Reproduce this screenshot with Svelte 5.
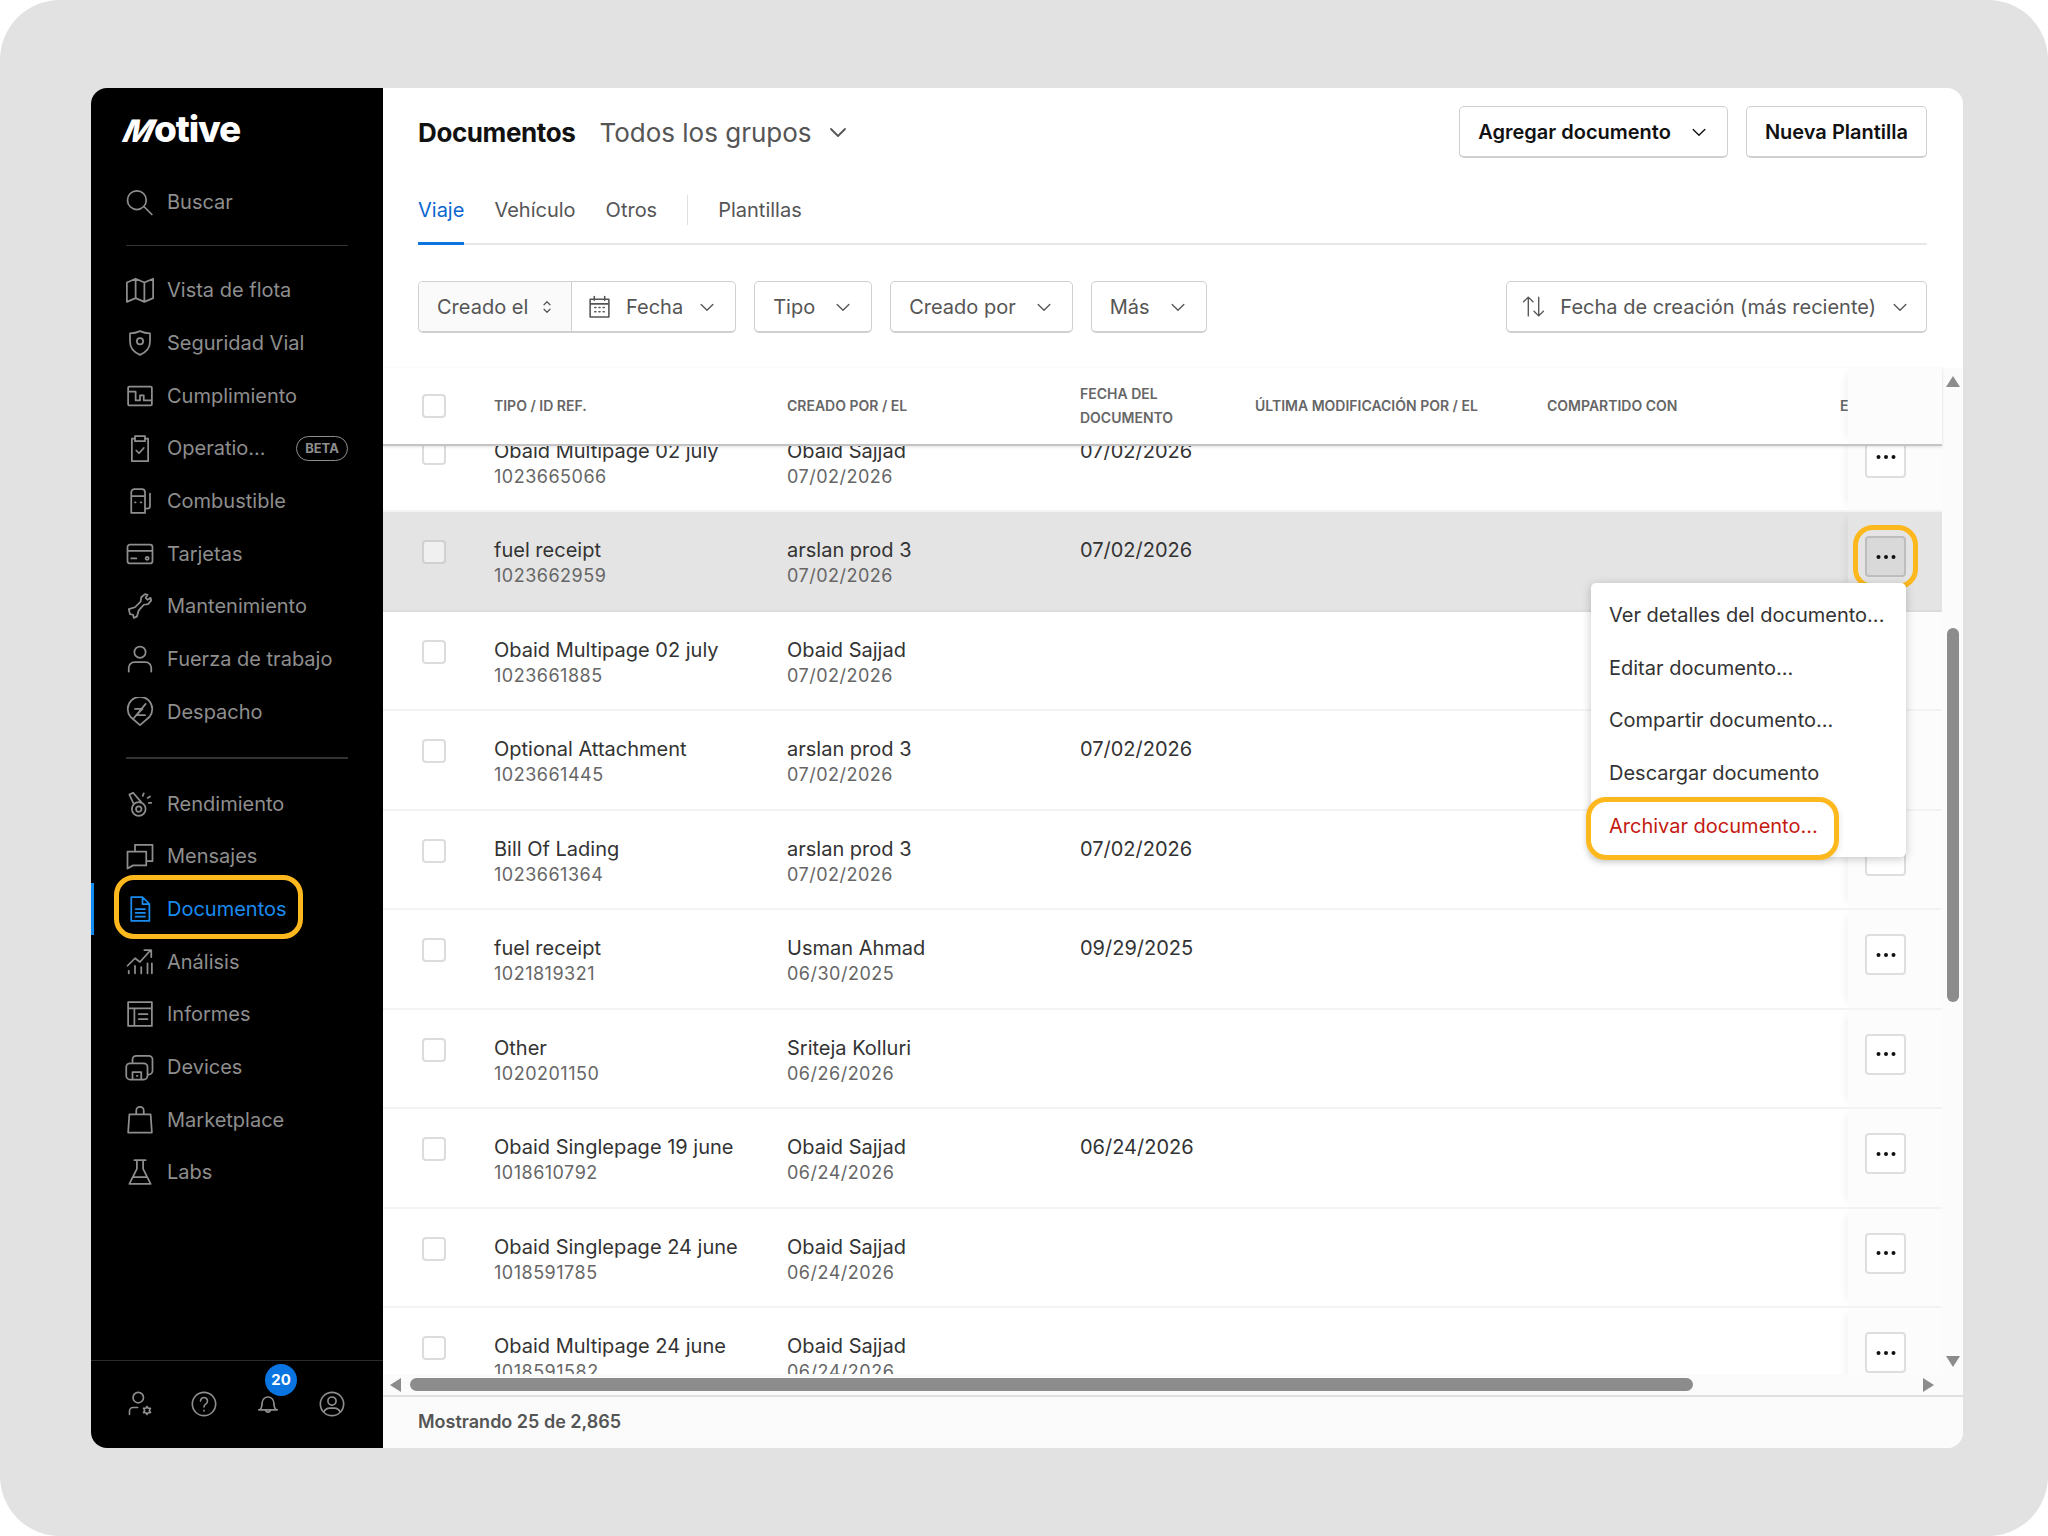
<script lang="ts">
  const icons = {
    search: "M17 10.5a7.5 7.5 0 1 1-15 0 7.5 7.5 0 0 1 15 0z M15.5 16l6 6",
    map: "M1.5 6l7-3 7 3 7-3v15.5l-7 3-7-3-7 3z M8.5 3v15.5 M15.5 6v15.5",
    shield: "M12 2.5c2.6 1.2 5.3 1.7 8 1.7V11c0 5-3.4 8.5-8 10.5C7.4 19.5 4 16 4 11V4.2c2.7 0 5.4-.5 8-1.7z M14.5 10.5a2.5 2.5 0 1 1-5 0 2.5 2.5 0 0 1 5 0z",
    compliance: "M3.5 4.5h17a1 1 0 0 1 1 1v13a1 1 0 0 1-1 1h-17a1 1 0 0 1-1-1v-13a1 1 0 0 1 1-1z M2.5 8.5h6v7h3.5v-4h3v4h6.5",
    clipboard: "M8 4.5H5.5v18h13v-18H16 M8 2.5h8v4H8z M9 14l2.2 2.2L15 12",
    fuel: "M5 21.5V5a2.5 2.5 0 0 1 2.5-2.5h6A2.5 2.5 0 0 1 16 5v16.5z M5 8h11 M16 18h2a2 2 0 0 0 2-2V6 M8 13h.5 M12.5 13h.5",
    card: "M2 6.5a2 2 0 0 1 2-2h16a2 2 0 0 1 2 2v11a2 2 0 0 1-2 2H4a2 2 0 0 1-2-2z M2 9.5h20 M5 15.5h4 M16.5 15.5a1.2 1.2 0 1 0 2.4 0 1.2 1.2 0 0 0-2.4 0z",
    wrench: "M3 14.5l5-1.5 4.5-4.5.5-3.5 3-2.5 2 .5-1.5 2.5 1.5 1.5 2.5-1.5.5 2-2.5 3-3.5.5L11 15.5 9.5 20.5l-2.5 1-.5-2.5-2.5-.5z",
    person: "M16.5 6.5a4.5 4.5 0 1 1-9 0 4.5 4.5 0 0 1 9 0z M3 22v-3a4.5 4.5 0 0 1 4.5-4.5h9A4.5 4.5 0 0 1 21 19v3",
    dispatch: "M12 22.5l-7.5-6.5a9.8 9.8 0 1 1 15 0z M8 9.5h6l-5 5h7 M16.5 5.5L7 17",
    medal: "M16.5 16a5.5 5.5 0 1 1-11 0 5.5 5.5 0 0 1 11 0z M13.2 16a2.2 2.2 0 1 1-4.4 0 2.2 2.2 0 0 1 4.4 0z M7 12L3.5 4.5l3-1.5 6.5 7.5 M15 3.5l-.8 2 M20 6l-1.8 1.2 M21 11h-2",
    messages: "M8 8V3h14v13h-5 M2 8.5h15v11H6.5l-4.5 2.5z",
    doc: "M5 2.5h9l5.5 5.5v13.5H5z M14 2.5V8h5.5 M8.5 12h7.5 M8.5 15h7.5 M8.5 18h7.5",
    chart: "M2 15l6-6 4 3 8-9 M15.5 2.5H21V8 M3 21v-2 M8 21v-6 M13 21v-5 M18 21v-8 M21.5 21v-8",
    report: "M2.5 2.5h19v19h-19z M2.5 7.5h19 M7.5 7.5v14 M11 12h7 M11 16h7",
    devices: "M6 8V6a3 3 0 0 1 3-3h10a3 3 0 0 1 3 3v9a3 3 0 0 1-3 3 M4 9h11a3 3 0 0 1 3 3v7a3 3 0 0 1-3 3H4a3 3 0 0 1-3-3v-7a3 3 0 0 1 3-3z M6 22v-6h7v6 M9.5 19h.5",
    bag: "M3.5 7.5h17l1 14.5h-19z M9 7.5V4.5a3 3 0 0 1 6 0v3",
    flask: "M7.5 2.5h9 M9.5 2.5v7L3.5 21.5h17L14.5 9.5v-7 M6.5 16h11",
    usergear: "M15 6.5a4.5 4.5 0 1 1-9 0 4.5 4.5 0 0 1 9 0z M3 21v-3a3 3 0 0 1 3-3h4 M18 14l1 1.6h2l-1 1.9 1 1.9h-2l-1 1.6-1-1.6h-2l1-1.9-1-1.9h2z",
    help: "M22 12a10 10 0 1 1-20 0 10 10 0 0 1 20 0z M9 9.5a3 3 0 1 1 4.5 2.6c-1 .6-1.5 1.2-1.5 2.4 M12 17.5v.5",
    bell: "M5 17c1.5-1.5 2-3 2-6a5 5 0 0 1 10 0c0 3 .5 4.5 2 6z M4 17h16 M10 17a2 2 0 1 0 4 0",
    avatar: "M22 12a10 10 0 1 1-20 0 10 10 0 0 1 20 0z M15.5 9.5a3.5 3.5 0 1 1-7 0 3.5 3.5 0 0 1 7 0z M5 19c1-2.5 3-3.5 5-3.5h4c2 0 4 1 5 3.5",
    chevron: "M5 9l7 7 7-7",
    updown: "M8 9l4-4 4 4 M8 15l4 4 4-4",
    calendar: "M3 5h18v17H3z M3 9.5h18 M7 2.5V6 M17 2.5V6 M7.5 13h1 M11.5 13h1 M15.5 13h1 M7.5 17h1 M11.5 17h1 M15.5 17h1",
    sort: "M7 21V3 M2.5 7.5L7 3l4.5 4.5 M17 3v18 M12.5 16.5L17 21l4.5-4.5"
  };

  const navTop = [
    { label: "Vista de flota", icon: "map" },
    { label: "Seguridad Vial", icon: "shield" },
    { label: "Cumplimiento", icon: "compliance" },
    { label: "Operatio...", icon: "clipboard", beta: true },
    { label: "Combustible", icon: "fuel" },
    { label: "Tarjetas", icon: "card" },
    { label: "Mantenimiento", icon: "wrench" },
    { label: "Fuerza de trabajo", icon: "person" },
    { label: "Despacho", icon: "dispatch" }
  ];
  const navBottom = [
    { label: "Rendimiento", icon: "medal" },
    { label: "Mensajes", icon: "messages" },
    { label: "Documentos", icon: "doc", active: true },
    { label: "Análisis", icon: "chart" },
    { label: "Informes", icon: "report" },
    { label: "Devices", icon: "devices" },
    { label: "Marketplace", icon: "bag" },
    { label: "Labs", icon: "flask" }
  ];

  const rows = [
    { name: "Obaid Multipage 02 july", id: "1023665066", by: "Obaid Sajjad", on: "07/02/2026", date: "07/02/2026" },
    { name: "fuel receipt", id: "1023662959", by: "arslan prod 3", on: "07/02/2026", date: "07/02/2026", selected: true },
    { name: "Obaid Multipage 02 july", id: "1023661885", by: "Obaid Sajjad", on: "07/02/2026", date: "" },
    { name: "Optional Attachment", id: "1023661445", by: "arslan prod 3", on: "07/02/2026", date: "07/02/2026" },
    { name: "Bill Of Lading", id: "1023661364", by: "arslan prod 3", on: "07/02/2026", date: "07/02/2026" },
    { name: "fuel receipt", id: "1021819321", by: "Usman Ahmad", on: "06/30/2025", date: "09/29/2025" },
    { name: "Other", id: "1020201150", by: "Sriteja Kolluri", on: "06/26/2026", date: "" },
    { name: "Obaid Singlepage 19 june", id: "1018610792", by: "Obaid Sajjad", on: "06/24/2026", date: "06/24/2026" },
    { name: "Obaid Singlepage 24 june", id: "1018591785", by: "Obaid Sajjad", on: "06/24/2026", date: "" },
    { name: "Obaid Multipage 24 june", id: "1018591582", by: "Obaid Sajjad", on: "06/24/2026", date: "" }
  ];

  const menu = ["Ver detalles del documento...", "Editar documento...", "Compartir documento...", "Descargar documento"];
</script>

{#snippet icon(name, cls = "")}
  <svg class={"ic " + cls} viewBox="0 0 24 24" fill="none" stroke="currentColor" stroke-linejoin="round" stroke-linecap="round">
    <path d={icons[name]} />
  </svg>
{/snippet}

{#snippet navItem(item)}
  <div class="nav-item" class:active={item.active}>
    <span class="nav-icon">{@render icon(item.icon)}</span>
    <span>{item.label}</span>
    {#if item.beta}<span class="beta">BETA</span>{/if}
  </div>
{/snippet}

<div class="frame">
  <div class="window">
    <aside class="sidebar">
      <div class="logo"><span class="logo-m">M</span>otive</div>
      <div class="search">
        <span class="nav-icon">{@render icon("search")}</span>
        <span>Buscar</span>
      </div>
      <div class="rule first"></div>
      <nav class="nav">
        {#each navTop as item}{@render navItem(item)}{/each}
      </nav>
      <div class="rule"></div>
      <nav class="nav">
        {#each navBottom as item}{@render navItem(item)}{/each}
      </nav>
      <div class="side-foot">
        <span class="foot-ic">{@render icon("usergear")}</span>
        <span class="foot-ic">{@render icon("help")}</span>
        <span class="foot-ic bell">{@render icon("bell")}<span class="badge">20</span></span>
        <span class="foot-ic">{@render icon("avatar")}</span>
      </div>
    </aside>

    <main class="main">
      <header class="header">
        <h1>Documentos</h1>
        <div class="groups">Todos los grupos {@render icon("chevron", "chev-lg")}</div>
        <div class="actions">
          <button class="btn strong">Agregar documento {@render icon("chevron", "chev")}</button>
          <button class="btn strong">Nueva Plantilla</button>
        </div>
      </header>

      <div class="tabs">
        <span class="tab on">Viaje</span>
        <span class="tab">Vehículo</span>
        <span class="tab">Otros</span>
        <span class="tab-sep"></span>
        <span class="tab">Plantillas</span>
      </div>

      <div class="filters">
        <div class="date-group">
          <span class="dg-left">Creado el {@render icon("updown", "updown")}</span>
          <span class="dg-right">{@render icon("calendar", "cal")} Fecha {@render icon("chevron", "chev")}</span>
        </div>
        <button class="btn flt">Tipo {@render icon("chevron", "chev")}</button>
        <button class="btn flt">Creado por {@render icon("chevron", "chev")}</button>
        <button class="btn flt">Más {@render icon("chevron", "chev")}</button>
        <button class="btn flt sort">{@render icon("sort", "sort-ic")} Fecha de creación (más reciente) {@render icon("chevron", "chev")}</button>
      </div>

      <div class="table-area">
        <div class="table">
          <div class="grid thead">
            <span class="cb-cell"><span class="cb"></span></span>
            <span>TIPO / ID REF.</span>
            <span>CREADO POR / EL</span>
            <span>FECHA DEL<br />DOCUMENTO</span>
            <span>ÚLTIMA MODIFICACIÓN POR / EL</span>
            <span>COMPARTIDO CON</span>
            <span class="clip">ESTADO</span>
            <span class="sticky"></span>
          </div>
          <div class="tbody">
            <div class="rows">
              {#each rows as row}
                <div class="grid row" class:selected={row.selected}>
                  <span class="cb-cell"><span class="cb"></span></span>
                  <div class="cell"><div class="main-t">{row.name}</div><div class="sub-t">{row.id}</div></div>
                  <div class="cell"><div class="main-t">{row.by}</div><div class="sub-t">{row.on}</div></div>
                  <div class="cell"><div class="main-t">{row.date}</div></div>
                  <div></div>
                  <div></div>
                  <div></div>
                  <div class="sticky">
                    <button class="dots" class:ringed={row.selected} aria-label="Acciones">
                      <svg viewBox="0 0 20 4" width="20" height="4" fill="#111"><circle cx="2.5" cy="2" r="2" /><circle cx="10" cy="2" r="2" /><circle cx="17.5" cy="2" r="2" /></svg>
                    </button>
                  </div>
                </div>
              {/each}
            </div>
          </div>
        </div>
        <div class="vbar">
          <span class="tri up"></span>
          <span class="vthumb"></span>
          <span class="tri down"></span>
        </div>
        <div class="menu">
          {#each menu as m}<div class="menu-item">{m}</div>{/each}
          <div class="menu-item danger">Archivar documento...</div>
        </div>
      </div>

      <div class="hbar">
        <span class="tri left"></span>
        <span class="hthumb"></span>
        <span class="tri right"></span>
      </div>
      <footer class="foot">Mostrando 25 de 2,865</footer>
    </main>
  </div>
</div>

<style>
  :global(body) {
    margin: 0;
    background: #fff;
  }
  .frame {
    width: 2048px;
    height: 1536px;
    box-sizing: border-box;
    padding: 88px 85px 88px 91px;
    background: #e2e2e2;
    border-radius: 60px;
    font-family: Inter, "Noto Sans", sans-serif;
    font-size: 20px;
    color: #333;
  }
  .window {
    display: flex;
    height: 100%;
    border-radius: 16px;
    overflow: hidden;
    background: #fff;
  }
  .ic {
    display: block;
    width: 100%;
    height: 100%;
    stroke-width: 1.4;
  }

  /* sidebar */
  .sidebar {
    width: 292px;
    flex: none;
    display: flex;
    flex-direction: column;
    background: #000;
    color: #8e8e8e;
  }
  .logo {
    margin: 19px 0 0 34px;
    height: 44px;
    line-height: 44px;
    font-size: 37px;
    font-weight: 800;
    letter-spacing: -1.2px;
    color: #fff;
  }
  .logo-m {
    display: inline-block;
    font-size: 31px;
    transform: skewX(-24deg);
    margin-right: 1px;
  }
  .search {
    display: flex;
    align-items: center;
    gap: 12px;
    height: 52px;
    margin-top: 25px;
    padding-left: 34px;
  }
  .nav-icon {
    width: 30px;
    height: 30px;
    flex: none;
  }
  .rule {
    height: 2px;
    margin: 19px 35px 18px;
    background: #333;
  }
  .rule.first {
    height: 1px;
    margin: 17px 35px 18px;
  }
  .nav {
    display: flex;
    flex-direction: column;
  }
  .nav-item {
    position: relative;
    display: flex;
    align-items: center;
    gap: 12px;
    height: 52.7px;
    padding-left: 34px;
    padding-right: 35px;
  }
  .nav-item.active {
    color: #1a8cf0;
  }
  .nav-item.active::before {
    content: "";
    position: absolute;
    left: 0;
    top: 0;
    bottom: 0;
    width: 3px;
    background: #0f8bf5;
  }
  .nav-item.active::after {
    content: "";
    position: absolute;
    left: 23px;
    top: -8px;
    width: 189px;
    height: 64px;
    box-sizing: border-box;
    border: 5px solid #fdb81e;
    border-radius: 20px;
  }
  .beta {
    margin-left: auto;
    box-sizing: border-box;
    width: 52px;
    height: 25px;
    line-height: 23px;
    text-align: center;
    font-size: 13px;
    font-weight: 700;
    border: 1px solid #8e8e8e;
    border-radius: 13px;
  }
  .side-foot {
    margin-top: auto;
    height: 88px;
    box-sizing: border-box;
    border-top: 1px solid #2a2a2a;
    display: flex;
    align-items: center;
    gap: 36px;
    padding: 0 0 2px 35px;
  }
  .foot-ic {
    position: relative;
    width: 28px;
    height: 28px;
  }
  .badge {
    position: absolute;
    left: 11px;
    top: -26px;
    width: 32px;
    height: 32px;
    border-radius: 50%;
    background: #0a74e0;
    color: #fff;
    font-size: 15px;
    font-weight: 700;
    line-height: 32px;
    text-align: center;
  }

  /* main */
  .main {
    flex: 1;
    min-width: 0;
    display: flex;
    flex-direction: column;
  }
  .header {
    display: flex;
    align-items: center;
    height: 52px;
    margin: 18px 36px 0 35px;
  }
  h1 {
    margin: 0 24px 0 0;
    font-size: 26px;
    font-weight: 700;
    letter-spacing: -0.4px;
    color: #111;
  }
  .groups {
    display: flex;
    align-items: center;
    gap: 14px;
    font-size: 26px;
    color: #555;
  }
  .chev-lg {
    width: 24px;
    height: 24px;
    stroke-width: 1.8;
  }
  .actions {
    margin-left: auto;
    display: flex;
    gap: 18px;
  }
  .btn {
    display: flex;
    align-items: center;
    box-sizing: border-box;
    height: 52px;
    padding: 0 18px;
    background: #fff;
    border: 1px solid #d0d0d0;
    border-bottom-width: 2px;
    border-radius: 5px;
    font: inherit;
    color: #555;
  }
  .btn.strong {
    font-weight: 600;
    color: #111;
    gap: 18px;
  }
  .chev {
    flex: none;
    width: 20px;
    height: 20px;
    stroke-width: 1.6;
  }
  .tabs {
    display: flex;
    align-items: flex-start;
    height: 57px;
    box-sizing: border-box;
    margin: 30px 36px 0 35px;
    border-bottom: 2px solid #e8e8e8;
    color: #555;
    gap: 30px;
    position: relative;
  }
  .tab {
    line-height: 44px;
    height: 55px;
    box-sizing: border-box;
  }
  .tab.on {
    color: #0a66d0;
    border-bottom: 3px solid #0a74e0;
    height: 57px;
  }
  .tab-sep {
    width: 1px;
    height: 30px;
    margin-top: 7px;
    background: #e0e0e0;
  }
  .filters {
    display: flex;
    gap: 18px;
    margin: 36px 36px 0 35px;
  }
  .date-group {
    display: flex;
    height: 52px;
    box-sizing: border-box;
    border: 1px solid #d0d0d0;
    border-bottom-width: 2px;
    border-radius: 5px;
    color: #555;
    overflow: hidden;
  }
  .dg-left {
    display: flex;
    align-items: center;
    width: 153px;
    box-sizing: border-box;
    padding-left: 18px;
    gap: 10px;
    background: #fafafa;
    border-right: 1px solid #d0d0d0;
  }
  .updown {
    width: 18px;
    height: 22px;
    stroke-width: 1.6;
  }
  .dg-right {
    display: flex;
    align-items: center;
    gap: 14px;
    padding: 0 18px 0 15px;
  }
  .cal {
    width: 25px;
    height: 25px;
    stroke-width: 1.5;
  }
  .flt {
    gap: 18px;
  }
  .sort {
    margin-left: auto;
    padding: 0 16px 0 14px;
    gap: 14px;
  }
  .sort-ic {
    width: 25px;
    height: 25px;
    stroke-width: 1.3;
  }

  /* table */
  .table-area {
    position: relative;
    flex: 1;
    min-height: 0;
    display: flex;
    margin-top: 35px;
  }
  .table {
    flex: 1;
    min-width: 0;
    display: flex;
    flex-direction: column;
  }
  .grid {
    display: grid;
    grid-template-columns: 111px 293px 293px 175px 292px 293px 8px 94px;
  }
  .thead {
    height: 78px;
    box-sizing: border-box;
    align-items: center;
    border-bottom: 2px solid #c4c4c4;
    box-shadow: 0 1px 3px rgba(0, 0, 0, 0.12);
    position: relative;
    z-index: 2;
    background: #fff;
    font-size: 14px;
    font-weight: 600;
    line-height: 24px;
    color: #666;
  }
  .thead .sticky {
    align-self: stretch;
  }
  .clip {
    overflow: hidden;
    white-space: nowrap;
  }
  .cb-cell {
    padding-left: 39px;
  }
  .cb {
    display: block;
    width: 24px;
    height: 24px;
    box-sizing: border-box;
    background: #fff;
    border: 2px solid #dcdcdc;
    border-radius: 4px;
  }
  .tbody {
    flex: 1;
    min-height: 0;
    overflow: hidden;
  }
  .rows {
    margin-top: -33.5px;
  }
  .row {
    height: 99.5px;
    box-sizing: border-box;
    border-bottom: 2px solid #f3f3f3;
  }
  .row > .cb-cell {
    padding-top: 28px;
  }
  .cell {
    padding-top: 25px;
  }
  .main-t {
    line-height: 26px;
    height: 26px;
    white-space: nowrap;
    color: #333;
  }
  .sub-t {
    line-height: 26px;
    font-size: 18px;
    letter-spacing: 0.5px;
    color: #666;
  }
  .sticky {
    background: #fcfcfc;
    box-shadow: -8px 0 8px -6px rgba(0, 0, 0, 0.06);
  }
  .row .sticky {
    padding: 24px 0 0 17px;
  }
  .selected {
    background: #e4e4e4;
    border-bottom-color: #dcdcdc;
  }
  .selected .sticky {
    background: #e4e4e4;
  }
  .selected .cb {
    background: #f0f0f0;
    border-color: #d0d0d0;
  }
  .dots {
    position: relative;
    display: flex;
    align-items: center;
    justify-content: center;
    width: 41px;
    height: 41px;
    padding: 0;
    background: #fff;
    border: 2px solid #dedede;
    border-radius: 4px;
  }
  .dots.ringed {
    background: #d9d9d9;
    border-color: #bdbdbd;
  }
  .dots.ringed::after {
    content: "";
    position: absolute;
    left: -14px;
    top: -13px;
    width: 65px;
    height: 64px;
    box-sizing: border-box;
    border: 5px solid #fdb81e;
    border-radius: 20px;
  }
  .vbar {
    width: 21px;
    flex: none;
    display: flex;
    flex-direction: column;
    align-items: center;
    padding: 8px 0 7px;
    box-sizing: border-box;
    background: #fbfbfb;
  }
  .tri {
    flex: none;
    width: 0;
    height: 0;
    border-style: solid;
    border-color: transparent;
  }
  .tri.up {
    border-width: 0 7.5px 11px;
    border-bottom-color: #8c8c8c;
  }
  .tri.down {
    margin-top: auto;
    border-width: 11px 7.5px 0;
    border-top-color: #8c8c8c;
  }
  .tri.left {
    border-width: 7.5px 11px 7.5px 0;
    border-right-color: #8c8c8c;
  }
  .tri.right {
    margin-left: auto;
    border-width: 7.5px 0 7.5px 11px;
    border-left-color: #8c8c8c;
  }
  .vthumb {
    width: 12px;
    height: 374px;
    margin-top: 241px;
    border-radius: 6px;
    background: #8c8c8c;
  }
  .menu {
    position: absolute;
    z-index: 5;
    top: 215px;
    right: 57px;
    width: 315px;
    padding: 6px 0 5px;
    box-sizing: border-box;
    background: #fff;
    border-radius: 5px;
    box-shadow: 0 2px 10px rgba(0, 0, 0, 0.22);
  }
  .menu-item {
    position: relative;
    height: 52.7px;
    line-height: 52.7px;
    padding-left: 18px;
    color: #333;
  }
  .danger {
    color: #c41a12;
  }
  .danger::after {
    content: "";
    position: absolute;
    left: -5px;
    top: -3px;
    width: 253px;
    height: 63px;
    box-sizing: border-box;
    border: 5px solid #fdb81e;
    border-radius: 20px;
    box-shadow: 0 2px 6px rgba(0, 0, 0, 0.12);
  }
  .hbar {
    flex: none;
    display: flex;
    align-items: center;
    height: 21px;
    padding: 0 29px 0 7px;
    box-sizing: border-box;
    background: #fbfbfb;
  }
  .hthumb {
    width: 1283px;
    height: 13px;
    margin-left: 9px;
    border-radius: 7px;
    background: #8c8c8c;
  }
  .foot {
    flex: none;
    height: 53px;
    box-sizing: border-box;
    border-top: 2px solid #e0e0e0;
    padding-left: 35px;
    line-height: 49px;
    font-size: 18px;
    font-weight: 600;
    color: #555;
    background: #fbfbfb;
  }
</style>
